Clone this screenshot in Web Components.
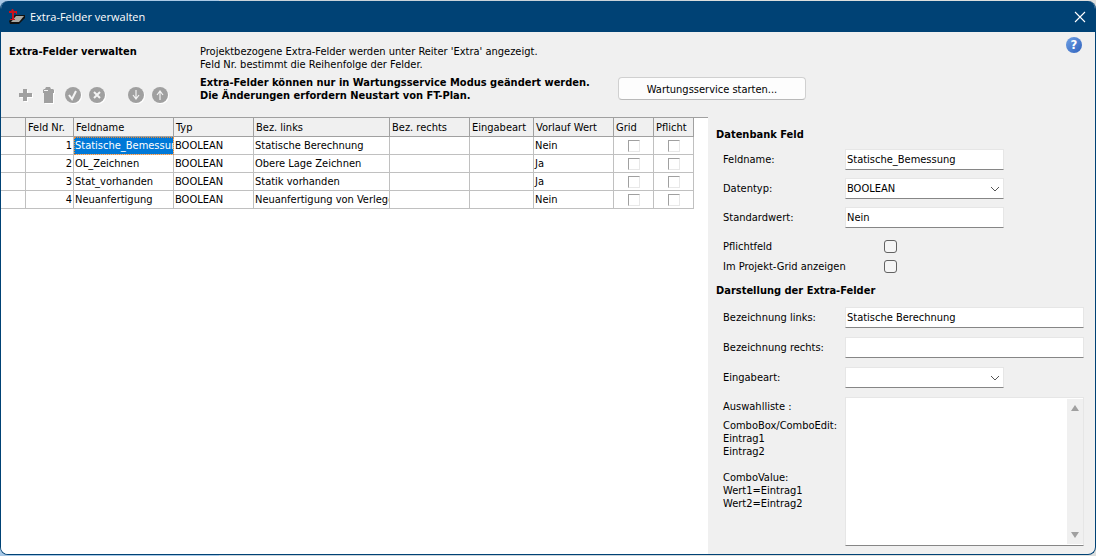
<!DOCTYPE html>
<html lang="de">
<head>
<meta charset="utf-8">
<title>Extra-Felder verwalten</title>
<style>
  html, body { height: 100%; }
  body {
    margin: 0;
    background: linear-gradient(90deg, #a9c9e6 0 20%, #c9d3da 20% 63%, #dcdedd 63%);
    color: #000;
    font: 11px/13px "DejaVu Sans Condensed", Tahoma, sans-serif;
  }
</style>
</head>
<body>
<extra-dialog></extra-dialog>

<script>
class ShadowElement extends HTMLElement {
  connectedCallback() {
    if (this.shadowRoot) return;
    this.attachShadow({ mode: 'open' }).innerHTML = this.render();
  }
}

/* Window chrome: title bar, border and rounded corners */
customElements.define('app-window', class extends ShadowElement {
  render() {
    return `
    <style>
      :host { display: flex; flex-direction: column; box-sizing: border-box; min-height: 100vh; padding: 1px 0; }
      .frame { flex: 1; display: flex; flex-direction: column; border: 1px solid #004275; border-top: 0; border-radius: 8px; overflow: hidden; background: #f0f0f0; }
      header { display: flex; align-items: center; gap: 5px; height: 31px; padding: 0 9px 0 8px; background: #004275; color: #fff; font: 11px/16px "Open Sans", "Segoe UI", sans-serif; }
      h1 { flex: 1; margin: 0; font: inherit; }
      button { display: flex; padding: 0; border: 0; background: none; }
      .body { flex: 1; display: flex; flex-direction: column; }
    </style>
    <div class="frame">
      <header>
        <svg width="16" height="16" viewBox="0 0 16 16" aria-hidden="true">
          <path d="M0 12l6-6h10v3l-6 6H1z" fill="#111"/>
          <path d="M2 13l5-6h8l-5 6z" fill="#a9aaa5"/>
          <path d="M3 0h1l1 2h3v3H7V4H5v6h1v1H1v-1h2V4H0V2h2z" fill="#c8101c"/>
        </svg>
        <h1><slot name="title"></slot></h1>
        <button type="button" aria-label="Schließen">
          <svg width="12" height="12" viewBox="0 0 12 12"><path d="M1 1l10 10M11 1L1 11" stroke="#fff" stroke-width="1.1"/></svg>
        </button>
      </header>
      <div class="body"><slot></slot></div>
    </div>`;
  }
});

/* Disabled toolbar buttons with an etched highlight */
customElements.define('tool-button', class extends ShadowElement {
  render() {
    const disc = '<circle cx="8" cy="8" r="8"/>';
    const mark = d => `<path d="${d}" fill="none" stroke="#f4f4f4" stroke-width="2"/>`;
    const thin = d => `<path d="${d}" fill="none" stroke="#f4f4f4" stroke-width="1.2"/>`;
    const icons = {
      add: '<path d="M6 2h4v4h5v4h-5v4H6v-4H2V6h4z"/>',
      remove: '<path d="M5 0h4l1 2h2l1 1v3h-1v10H3V6H2V3l1-1h1z"/><path d="M3 3.500h4" stroke="#f4f4f4"/>',
      accept: disc + mark('M4 8l3 4 4-8'),
      cancel: disc + mark('M5 5l6 6M11 5l-6 6'),
      down: disc + thin('M8 3v9M5 8l3 4 3-4'),
      up: disc + thin('M8 13V4M5 8l3-4 3 4')
    };
    return `
    <style>
      :host { display: block; }
      button { display: flex; justify-content: center; width: 24px; padding: 0; border: 0; background: none; }
      svg { overflow: visible; fill: #a0a0a0; filter: drop-shadow(1px 1px 0 #fff); }
    </style>
    <button type="button" disabled aria-label="${this.getAttribute('label')}">
      <svg width="16" height="16" viewBox="0 0 16 16">${icons[this.getAttribute('icon')]}</svg>
    </button>`;
  }
});

customElements.define('dialog-header', class extends ShadowElement {
  render() {
    return `
    <style>
      :host { display: flex; box-sizing: border-box; height: 85px; padding: 0 13px 0 8px; }
      .left { display: flex; flex-direction: column; width: 191px; padding-top: 13px; box-sizing: border-box; }
      h2 { margin: 0 0 29px; font: inherit; font-weight: bold; }
      .tools { display: flex; padding-left: 4px; }
      .gap { width: 15px; }
      .info { width: 418px; padding-top: 13px; }
      p { margin: 0 0 5px; }
      .start { margin-top: 45px; width: 188px; height: 23px; padding: 1px 0 0; border: 1px solid #d0d0d0; border-bottom-color: #b9b9b9; border-radius: 4px; background: #fdfdfd; color: #000; font: inherit; }
      .help { display: flex; margin: 5px 0 0 auto; height: 16px; padding: 0; border: 0; background: none; }
      .help span { display: block; width: 16px; height: 16px; border-radius: 8px; background: linear-gradient(135deg, #6fa0e4, #2f62bd); color: #fff; font: bold 13px/16px "DejaVu Sans Condensed", sans-serif; text-align: center; }
    </style>
    <div class="left">
      <h2>Extra-Felder verwalten</h2>
      <div class="tools">
        <tool-button icon="add" label="Hinzufügen"></tool-button>
        <tool-button icon="remove" label="Löschen"></tool-button>
        <tool-button icon="accept" label="Übernehmen"></tool-button>
        <tool-button icon="cancel" label="Abbrechen"></tool-button>
        <div class="gap"></div>
        <tool-button icon="down" label="Nach unten"></tool-button>
        <tool-button icon="up" label="Nach oben"></tool-button>
      </div>
    </div>
    <div class="info">
      <p>Projektbezogene Extra-Felder werden unter Reiter 'Extra' angezeigt.<br>Feld Nr. bestimmt die Reihenfolge der Felder.</p>
      <p><b>Extra-Felder können nur in Wartungsservice Modus geändert werden.<br>Die Änderungen erfordern Neustart von FT-Plan.</b></p>
    </div>
    <button class="start" type="button">Wartungsservice starten...</button>
    <button class="help" type="button" aria-label="Hilfe"><span>?</span></button>`;
  }
});

/* Read-only data grid */
customElements.define('field-grid', class extends ShadowElement {
  render() {
    const cols = [['', 25], ['Feld Nr.', 48], ['Feldname', 100], ['Typ', 80], ['Bez. links', 136], ['Bez. rechts', 80],
      ['Eingabeart', 64], ['Vorlauf Wert', 80], ['Grid', 40], ['Pflicht', 40]];
    const rows = [
      [1, 'Statische_Bemessung', 'Statische Berechnung', 'Nein'],
      [2, 'OL_Zeichnen', 'Obere Lage Zeichnen', 'Ja'],
      [3, 'Stat_vorhanden', 'Statik vorhanden', 'Ja'],
      [4, 'Neuanfertigung', 'Neuanfertigung von Verlegeplänen', 'Nein']
    ];
    const box = label => `<td class="c"><input type="checkbox" disabled aria-label="${label}"></td>`;
    return `
    <style>
      :host { display: block; background: #fff; border-top: 1px solid #a0a0a0; }
      table { width: 693px; table-layout: fixed; border-collapse: separate; border-spacing: 0; }
      th, td { box-sizing: border-box; height: 18px; padding: 1px 0 0 1px; overflow: hidden; white-space: nowrap; text-align: left; font-weight: normal; line-height: 16px; border: solid #c0c0c0; border-width: 0 1px 1px 0; }
      th { height: 19px; background: #f0f0f0; border-color: #a0a0a0; padding: 2px 0 0 2px; }
      td.nr { text-align: right; padding-right: 1px; }
      td.sel { background: #0078d7; color: #fff; outline: 1px dotted #f08a30; outline-offset: -1px; }
      td.c { text-align: center; padding: 0; }
      input { appearance: none; display: block; width: 12px; height: 12px; margin: 0 auto; background: #fff; border: 1px solid #e8e8e8; border-top-color: #a0a0a0; border-left-color: #a0a0a0; }
    </style>
    <table>
      <colgroup>${cols.map(c => `<col style="width:${c[1]}px">`).join('')}</colgroup>
      <thead><tr>${cols.map(c => `<th>${c[0]}</th>`).join('')}</tr></thead>
      <tbody>${rows.map(([n, name, left, value]) => `<tr><td></td><td class="nr">${n}</td><td${n === 1 ? ' class="sel"' : ''}>${name}</td><td>BOOLEAN</td><td>${left}</td><td></td><td></td><td>${value}</td>${box('Grid')}${box('Pflicht')}</tr>`).join('')}</tbody>
    </table>`;
  }
});

/* One labelled row of the form: type = text | select | check | area */
customElements.define('form-row', class extends ShadowElement {
  render() {
    const type = this.getAttribute('type');
    const value = this.getAttribute('value') || '';
    const control = {
      text: `<input id="f" class="box" type="text" value="${value}">`,
      select: `<div class="select box"><select id="f"><option>${value}</option></select><svg width="10" height="6" viewBox="0 0 10 6"><path d="M1 1l4 4 4-4" fill="none" stroke="#555"/></svg></div>`,
      check: '<input id="f" type="checkbox">',
      area: `<div class="area box"><textarea id="f"></textarea><div class="bar">
        <svg width="8" height="6" viewBox="0 0 8 6"><path d="M4 0l4 6H0z" fill="#a0a0a0"/></svg>
        <svg width="8" height="6" viewBox="0 0 8 6"><path d="M4 6l4-6H0z" fill="#a0a0a0"/></svg></div></div>`
    }[type];
    return `
    <style>
      :host { display: grid; grid-template-columns: 122px 1fr; align-items: center; min-height: 21px; }
      :host([type="check"]) { min-height: 20px; }
      :host([type="area"]) { align-items: stretch; }
      :host([type="area"]) .label { padding-top: 3px; }
      .label { white-space: nowrap; }
      .box { box-sizing: border-box; width: 239px; height: 21px; border: 1px solid #e6e6e6; border-bottom-color: #868686; background: #fff; }
      :host([short]) .box { width: 159px; }
      input.box { margin: 0; padding: 0 0 1px 1px; font: inherit; color: #000; border-radius: 0; outline: none; }
      .select { display: grid; align-items: center; }
      select { grid-area: 1 / 1; appearance: none; width: 100%; height: 19px; margin: 0; padding: 0 20px 1px 1px; border: 0; border-radius: 0; background: none; font: inherit; color: #000; }
      .select svg { grid-area: 1 / 1; justify-self: end; margin-right: 3px; }
      input[type="checkbox"] { appearance: none; width: 13px; height: 13px; margin: 0 0 0 39px; border: 1px solid #626262; border-radius: 3px; background: #f5f5f5; }
      .area { display: flex; height: 149px; }
      .area.box { height: 149px; }
      textarea { flex: 1; min-width: 0; margin: 0; padding: 2px; border: 0; resize: none; outline: none; font: inherit; }
      .bar { display: flex; flex-direction: column; justify-content: space-between; align-items: center; width: 16px; padding: 6px 0; margin: 1px 0; box-sizing: border-box; background: #f0f0f0; }
    </style>
    <div class="label"><label for="f">${this.getAttribute('label')}</label><slot></slot></div>${control}`;
  }
});

customElements.define('field-form', class extends ShadowElement {
  render() {
    return `
    <style>
      :host { display: flex; flex-direction: column; box-sizing: border-box; padding: 11px 0 7px 8px; }
      h2 { margin: 0; font: inherit; font-weight: bold; }
      section { display: flex; flex-direction: column; gap: 8px; padding: 8px 0 8px 7px; }
      section + h2 + section { gap: 9px; padding: 10px 0 0 7px; }
      p { margin: 6px 0 13px; }
      p:last-child { margin-bottom: 0; }
    </style>
    <h2>Datenbank Feld</h2>
    <section>
      <form-row type="text" short label="Feldname:" value="Statische_Bemessung"></form-row>
      <form-row type="select" short label="Datentyp:" value="BOOLEAN"></form-row>
      <form-row type="text" short label="Standardwert:" value="Nein"></form-row>
      <div>
        <form-row type="check" label="Pflichtfeld"></form-row>
        <form-row type="check" label="Im Projekt-Grid anzeigen"></form-row>
      </div>
    </section>
    <h2>Darstellung der Extra-Felder</h2>
    <section>
      <form-row type="text" label="Bezeichnung links:" value="Statische Berechnung"></form-row>
      <form-row type="text" label="Bezeichnung rechts:"></form-row>
      <form-row type="select" short label="Eingabeart:"></form-row>
      <form-row type="area" label="Auswahlliste :">
        <p>ComboBox/ComboEdit:<br>Eintrag1<br>Eintrag2</p>
        <p>ComboValue:<br>Wert1=Eintrag1<br>Wert2=Eintrag2</p>
      </form-row>
    </section>`;
  }
});

customElements.define('extra-dialog', class extends ShadowElement {
  render() {
    return `
    <style>
      :host { display: block; }
      main { flex: 1; display: flex; }
      field-grid { flex: 1; min-width: 0; }
      field-form { width: 387px; }
    </style>
    <app-window>
      <span slot="title">Extra-Felder verwalten</span>
      <dialog-header></dialog-header>
      <main>
        <field-grid></field-grid>
        <field-form></field-form>
      </main>
    </app-window>`;
  }
});
</script>
</body>
</html>
